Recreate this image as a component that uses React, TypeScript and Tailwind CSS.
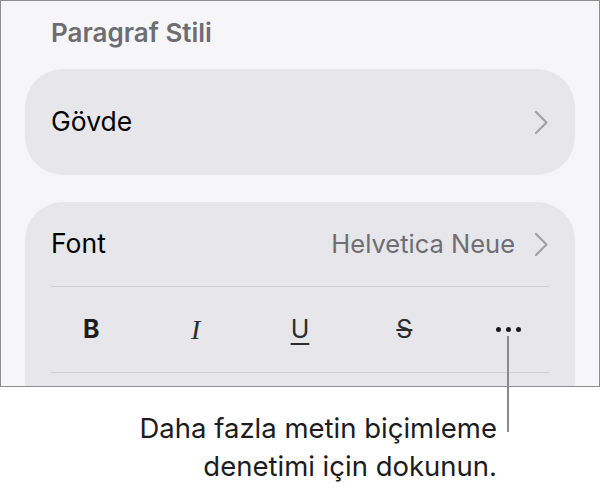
const Chevron = () => (
  <svg width="14" height="25" viewBox="0 0 14 25" fill="none" className="shrink-0">
    <path d="M2 2 L12.5 12.5 L2 23" stroke="#a1a1a6" strokeWidth="2.2" strokeLinecap="round" strokeLinejoin="round" />
  </svg>
);

export default function App() {
  return (
    <div className="relative w-[601px] h-[491px] bg-white font-['Inter','Liberation_Sans',sans-serif] antialiased">
      {/* screenshot frame */}
      <div className="w-[600px] h-[387px] border border-[#8e8e8e] bg-[#f6f6f8] overflow-hidden px-6 pt-[17px]">
        <h2 className="pl-[26px] text-[26px] leading-[30px] font-semibold text-[#6d6d72] mb-[21px]">
          Paragraf Stili
        </h2>

        <div className="h-[106px] rounded-[38px] bg-[#e6e6eb] flex items-center justify-between pl-[26px] pr-[27px]">
          <span className="text-[26.5px] text-black">Gövde</span>
          <Chevron />
        </div>

        <div className="mt-[27px] rounded-[38px] bg-[#e6e6eb] h-[300px]">
          <div className="h-[84px] flex items-center justify-between pl-[26px] pr-[27px]">
            <span className="text-[26.5px] text-black">Font</span>
            <div className="flex items-center gap-[19px]">
              <span className="text-[25.5px] text-[#6e6e73]">Helvetica Neue</span>
              <Chevron />
            </div>
          </div>
          <div className="mx-[26px] h-px bg-[#cfcfd4]" />
          <div className="h-[85px] grid grid-cols-5 px-[14px] items-center">
            <div className="flex justify-center">
              <span className="text-[25px] font-bold text-[#1c1c1e]">B</span>
            </div>
            <div className="flex justify-center">
              <span className="text-[28px] italic font-['Liberation_Serif',serif] text-[#2c2c2e]">I</span>
            </div>
            <div className="flex justify-center">
              <span className="text-[25px] text-[#2c2c2e] underline underline-offset-[5px] decoration-[1.5px]">U</span>
            </div>
            <div className="flex justify-center">
              <span className="text-[25px] text-[#2c2c2e] line-through decoration-[1.5px]">S</span>
            </div>
            <div className="flex justify-center gap-[5px]">
              <span className="w-[5px] h-[5px] rounded-full bg-[#1c1c1e]" />
              <span className="w-[5px] h-[5px] rounded-full bg-[#1c1c1e]" />
              <span className="w-[5px] h-[5px] rounded-full bg-[#1c1c1e]" />
            </div>
          </div>
          <div className="mx-[26px] h-px bg-[#cfcfd4]" />
        </div>
      </div>

      {/* callout */}
      <div className="absolute left-[507px] top-[336px] w-[2px] h-[96px] bg-[#8a8a8a]" />
      <p className="mt-[22px] pr-[104px] text-right text-[27.5px] leading-[38px] text-[#1c1c1e]">
        Daha fazla metin biçimleme
        <br />
        denetimi için dokunun.
      </p>
    </div>
  );
}
